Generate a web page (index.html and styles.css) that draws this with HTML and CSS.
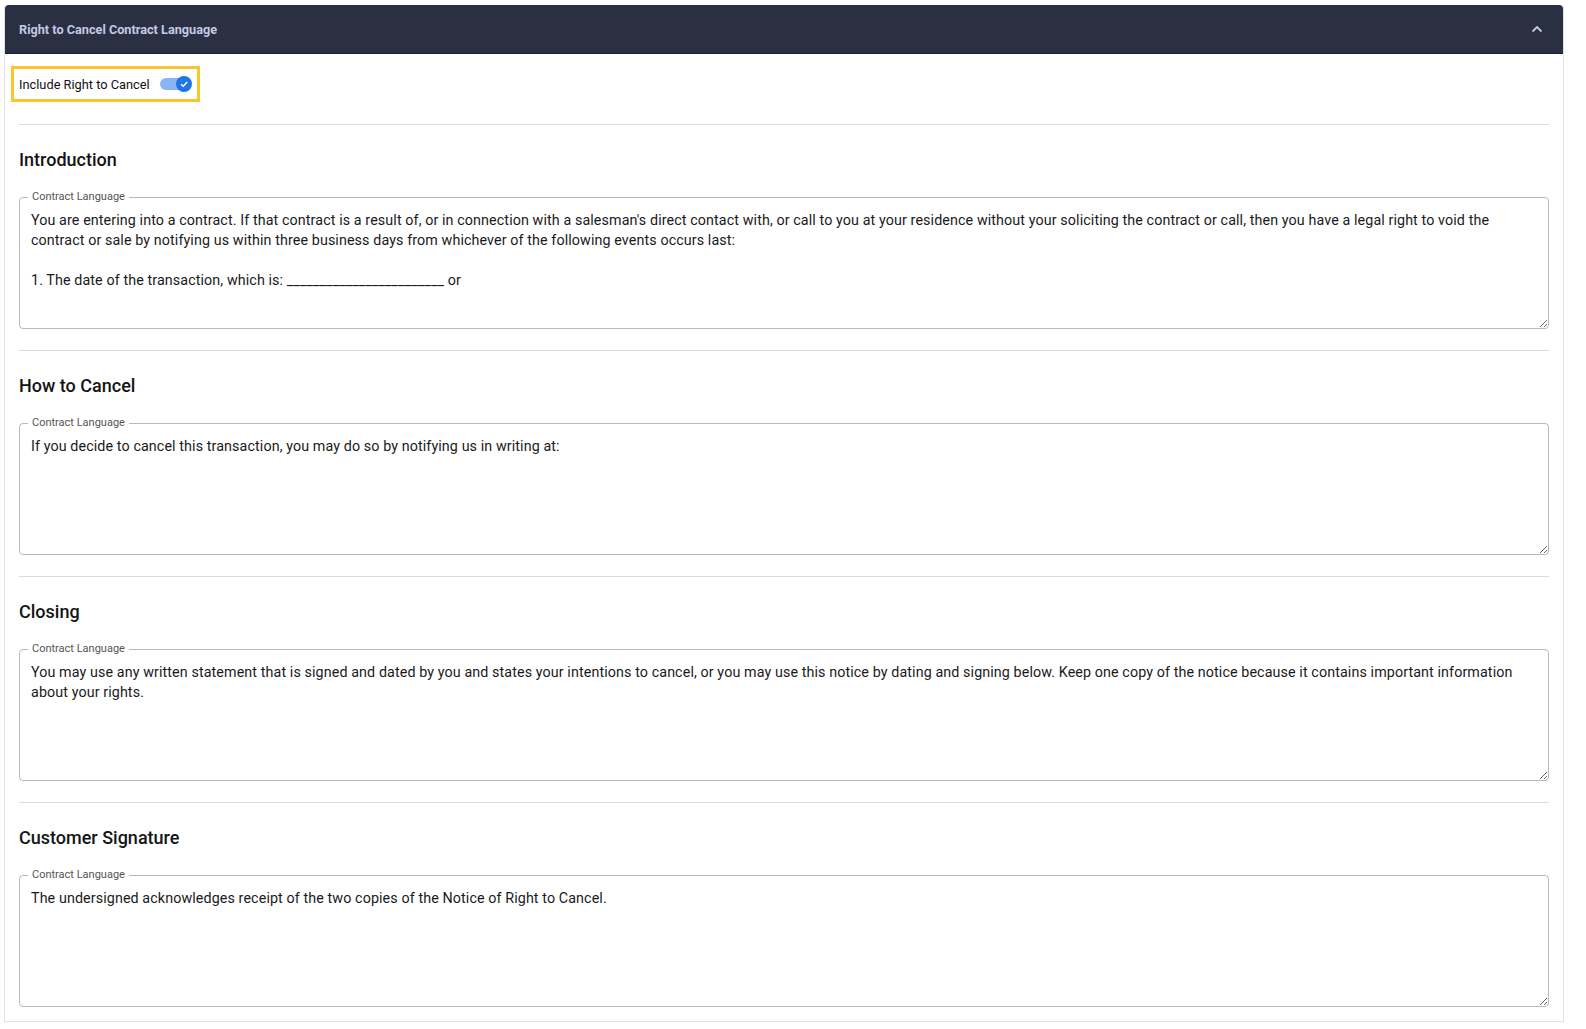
FILE: index.html
```html
<!DOCTYPE html>
<html lang="en">
<head>
    <meta charset="UTF-8">
    <meta name="viewport" content="width=device-width, initial-scale=1.0">
    <title>Right to Cancel Contract Language</title>
    <link rel="stylesheet" href="styles.css">
</head>
<body>
    <div class="panel">
        <!-- Panel header -->
        <div class="panel-header">
            <span class="panel-title">Right to Cancel Contract Language</span>
            <svg class="chevron" width="12" height="8" viewBox="0 0 12 8">
                <path d="M1.5 6.5 L6 2 L10.5 6.5" fill="none" stroke="#c3c9e4" stroke-width="1.8"/>
            </svg>
        </div>

        <div class="panel-body">
            <label class="toggle-row">
                <span>Include Right to Cancel</span>
                <span class="switch">
                    <span class="track"></span>
                    <span class="knob">
                        <svg width="10" height="10" viewBox="0 0 10 10">
                            <path d="M2 5.2 L4.2 7.3 L8.2 3" fill="none" stroke="#fff" stroke-width="1.4"/>
                        </svg>
                    </span>
                </span>
            </label>

            <div class="section">
                <h2>Introduction</h2>
                <fieldset class="field">
                    <legend>Contract Language</legend>
                    <textarea>You are entering into a contract. If that contract is a result of, or in connection with a salesman's direct contact with, or call to you at your residence without your soliciting the contract or call, then you have a legal right to void the contract or sale by notifying us within three business days from whichever of the following events occurs last:

1. The date of the transaction, which is: ________________________ or</textarea>
                </fieldset>
            </div>

            <div class="section">
                <h2>How to Cancel</h2>
                <fieldset class="field">
                    <legend>Contract Language</legend>
                    <textarea>If you decide to cancel this transaction, you may do so by notifying us in writing at:</textarea>
                </fieldset>
            </div>

            <div class="section">
                <h2>Closing</h2>
                <fieldset class="field">
                    <legend>Contract Language</legend>
                    <textarea>You may use any written statement that is signed and dated by you and states your intentions to cancel, or you may use this notice by dating and signing below. Keep one copy of the notice because it contains important information about your rights.</textarea>
                </fieldset>
            </div>

            <div class="section">
                <h2>Customer Signature</h2>
                <fieldset class="field">
                    <legend>Contract Language</legend>
                    <textarea>The undersigned acknowledges receipt of the two copies of the Notice of Right to Cancel.</textarea>
                </fieldset>
            </div>
        </div>
    </div>
</body>
</html>
```

FILE: styles.css
```css
body {
    font-family: Roboto, "Liberation Sans", Arial, sans-serif;
    margin: 0;
    padding: 5px 22px 0 4px;
    background-color: #fff;
    color: #1a1a1a;
}
.panel {
    border: 1px solid #e2e2e2;
    border-top: none;
    border-radius: 4px 4px 0 0;
    background: #fff;
}
.panel-header {
    height: 49px;
    background-color: #2a2f42;
    border-radius: 4px 4px 0 0;
    display: flex;
    align-items: center;
    justify-content: space-between;
    padding: 0 20px 0 14px;
    border-bottom: 1px solid #1d2130;
    box-sizing: border-box;
}
.panel-title {
    color: #c3c9e4;
    font-size: 12.7px;
    font-weight: 700;
}
.chevron {
    display: block;
}
.panel-body {
    padding: 12px 14px 14px 14px;
}
.toggle-row {
    display: inline-flex;
    align-items: center;
    gap: 10px;
    height: 30px;
    margin-left: -8px;
    padding: 0 5px 0 5px;
    border: 3px solid #fbc52f;
    font-size: 12.8px;
    color: #111;
    cursor: pointer;
}
.switch {
    position: relative;
    width: 32px;
    height: 16px;
    display: inline-block;
}
.track {
    position: absolute;
    left: 0;
    top: 2px;
    width: 30px;
    height: 12px;
    border-radius: 6px;
    background-color: #8ab4f4;
}
.knob {
    position: absolute;
    right: 0;
    top: 0;
    width: 16px;
    height: 16px;
    border-radius: 50%;
    background-color: #1f74e6;
    display: flex;
    align-items: center;
    justify-content: center;
}
.section {
    border-top: 1px solid #dcdcdc;
    margin-top: 21px;
    padding-top: 23px;
}
.toggle-row + .section {
    margin-top: 22px;
}
h2 {
    margin: 0 0 18px 0;
    font-size: 18px;
    line-height: 24px;
    font-weight: 500;
    color: #141414;
}
.field {
    margin: 0;
    padding: 0;
    border: 1px solid #b9b9b9;
    border-radius: 4px;
    min-width: 0;
}
.field legend {
    margin-left: 8px;
    padding: 0 4px;
    font-size: 11px;
    line-height: 14px;
    color: #555;
}
.field textarea {
    display: block;
    width: 100%;
    box-sizing: border-box;
    height: 124px;
    margin: 0;
    padding: 6px 11px;
    border: none;
    outline: none;
    background: transparent;
    font-family: Roboto, "Liberation Sans", Arial, sans-serif;
    font-size: 14.3px;
    letter-spacing: 0.1px;
    line-height: 20px;
    color: #1a1a1a;
    resize: vertical;
}
```
